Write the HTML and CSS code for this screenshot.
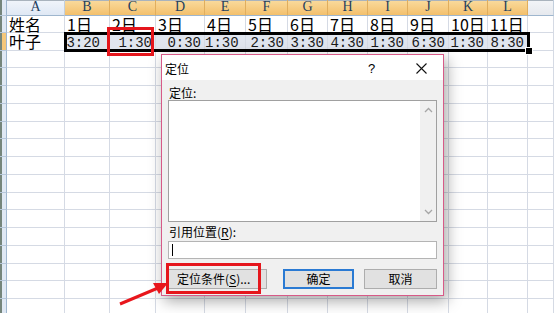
FILE: index.html
```html
<!DOCTYPE html>
<html lang="zh-CN">
<head>
  <meta charset="UTF-8" />
  <title>定位</title>
  <link rel="stylesheet" href="styles.css">
</head>
<body>
  <div class="sheet" id="sheet"></div>

  <div class="range-box"><span class="handle"></span></div>
  <div class="mark mark-cell"></div>

  <div class="dialog">
    <div class="title-bar">
      <span class="title">定位</span>
      <span class="help">?</span>
      <svg class="close" width="11" height="11" viewBox="0 0 11 11">
        <path d="M0.5 0.5 L10.5 10.5 M10.5 0.5 L0.5 10.5" stroke="#111" stroke-width="1.1" fill="none"/>
      </svg>
    </div>
    <div class="dialog-body">
      <div class="label">定位:</div>
      <div class="listbox">
        <div class="list-area"></div>
        <div class="scrollbar">
          <svg width="9" height="6" viewBox="0 0 9 6"><path d="M1 5 L4.5 1.5 L8 5" stroke="#a6a6a6" stroke-width="1.3" fill="none"/></svg>
          <svg width="9" height="6" viewBox="0 0 9 6"><path d="M1 1 L4.5 4.5 L8 1" stroke="#a6a6a6" stroke-width="1.3" fill="none"/></svg>
        </div>
      </div>
      <div class="label label-ref">引用位置(<u>R</u>):</div>
      <div class="ref-input"><span class="caret"></span></div>
      <div class="buttons">
        <div class="btn btn-special">定位条件(<u>S</u>)...</div>
        <div class="btn btn-default">确定</div>
        <div class="btn btn-cancel">取消</div>
      </div>
    </div>
  </div>

  <div class="mark mark-btn"></div>

  <svg class="arrow" width="554" height="313" viewBox="0 0 554 313">
    <line x1="120" y1="304" x2="158" y2="288" stroke="#e8161c" stroke-width="3"/>
    <polygon points="168,283 153,283 159,294" fill="#e8161c"/>
  </svg>

  <script>
    const cols = ['A', 'B', 'C', 'D', 'E', 'F', 'G', 'H', 'I', 'J', 'K', 'L'];
    const days = ['姓名', '1日', '2日', '3日', '4日', '5日', '6日', '7日', '8日', '9日', '10日', '11日'];
    const times = ['叶子', '3:20', '1:30', '0:30', '1:30', '2:30', '3:30', '4:30', '1:30', '6:30', '1:30', '8:30'];
    const sheet = document.getElementById('sheet');

    function cell(cls, text) {
      const div = document.createElement('div');
      div.className = cls;
      if (text) div.textContent = text;
      sheet.appendChild(div);
      return div;
    }

    // column header row
    cell('corner');
    cols.forEach((c, i) => cell(i === 0 ? 'col-head' : 'col-head picked', c));
    cell('col-head rest');

    // row 1
    cell('row-head');
    days.forEach(d => cell('c txt', d));
    cell('c');

    // row 2 (selected)
    cell('row-head picked');
    times.forEach((t, i) => {
      const div = cell(i === 0 ? 'c txt' : 'c sel time', t);
      if (i === 1) div.classList.add('pad-b');
      if (i === 4) div.classList.add('pad-e');
    });
    cell('c');

    // empty rows
    for (let r = 0; r < 15; r++) {
      cell('row-head');
      for (let i = 0; i <= cols.length; i++) cell('c');
    }
  </script>
</body>
</html>
```

FILE: styles.css
```css
body {
  margin: 0;
  width: 554px;
  height: 313px;
  overflow: hidden;
  background: #fff;
  position: relative;
}

.sheet {
  display: grid;
  grid-template-columns: 7px 58px 45px 46px 49px 41px 42px 40px 40px 40px 41px 39px 40px 1fr;
  grid-template-rows: 16px 17px 17.5px repeat(15, 17.75px);
}

.sheet > div {
  box-sizing: border-box;
  border-right: 1px solid #d5dae4;
  border-bottom: 1px solid #d5dae4;
  white-space: nowrap;
}

.corner,
.row-head {
  background: linear-gradient(to right, #75857b 0 2px, #dfe8f4 2px);
}

.sheet > .corner,
.sheet > .row-head {
  border-right: 1px solid #9eb6ce;
  border-bottom: 1px solid #b6c7da;
}

.sheet > .row-head.picked {
  background: linear-gradient(to right, #75857b 0 2px, #f5c77a 2px);
}

.col-head {
  background: linear-gradient(#f1f5fb, #dfe8f4);
  font-family: "Liberation Serif", serif;
  font-size: 14px;
  line-height: 14px;
  color: #24405e;
  text-align: center;
  box-shadow: inset 0 1px #a9b3bd;
}

.sheet > .col-head {
  border-right: 1px solid #c2cfdd;
  border-bottom: 1px solid #9eb6ce;
}

.col-head.picked {
  background: linear-gradient(#fadb9e, #f3c06c);
}

.sheet > .col-head.picked {
  border-right: 1px solid #e0ae5e;
}

.col-head.rest {
  background: linear-gradient(#f3f5f8, #e6e9ee);
}

.txt {
  font-family: "Noto Sans CJK SC", sans-serif;
  font-size: 16px;
  line-height: 16px;
  padding-left: 2px;
  color: #000;
}

.sel {
  background: #e0e5ee;
}

.time {
  font-family: "Liberation Mono", monospace;
  font-size: 14px;
  line-height: 14px;
  text-align: right;
  padding: 3px 3px 0 0;
  color: #1a1a1a;
}

.time.pad-b {
  padding-right: 9px;
}

.time.pad-e {
  padding-right: 12px;
}

.range-box {
  position: absolute;
  left: 64px;
  top: 32px;
  width: 466px;
  height: 20px;
  box-sizing: border-box;
  border: 3px solid #000;
}

.handle {
  position: absolute;
  right: -6px;
  bottom: -6px;
  width: 6px;
  height: 6px;
  background: #000;
  border: 1px solid #fff;
}

.mark {
  position: absolute;
  box-sizing: border-box;
  border: 3px solid #e5161c;
}

.mark-cell {
  left: 107px;
  top: 27px;
  width: 47px;
  height: 29px;
}

.mark-btn {
  left: 166px;
  top: 263px;
  width: 95px;
  height: 31px;
}

.arrow {
  position: absolute;
  left: 0;
  top: 0;
}

.dialog {
  position: absolute;
  left: 161px;
  top: 54px;
  width: 283px;
  height: 242px;
  box-sizing: border-box;
  border: 1px solid #d75a88;
  background: #f0f0f0;
  box-shadow: 3px 5px 14px rgba(0, 0, 0, 0.35);
  font-family: "Noto Sans CJK SC", sans-serif;
  font-size: 12px;
  color: #000;
  display: flex;
  flex-direction: column;
}

.title-bar {
  height: 25px;
  background: #fff;
  display: flex;
  align-items: center;
  padding-left: 3px;
}

.title {
  flex: 1;
  line-height: 14px;
  padding-top: 2px;
}

.help {
  font-family: "Liberation Sans", sans-serif;
  font-size: 13px;
  width: 12px;
  margin-right: 36px;
  padding-top: 2px;
}

.close {
  margin-right: 16px;
  margin-top: 2px;
}

.dialog-body {
  padding: 5px 6px 0 6px;
  display: flex;
  flex-direction: column;
}

.label {
  line-height: 15px;
  height: 15px;
  padding-left: 1px;
}

.listbox {
  height: 122px;
  box-sizing: border-box;
  border: 1px solid #a0a0a0;
  background: #fff;
  display: flex;
}

.list-area {
  flex: 1;
}

.scrollbar {
  width: 16px;
  background: #f0f0f0;
  display: flex;
  flex-direction: column;
  justify-content: space-between;
  align-items: center;
  padding: 6px 0;
}

.label-ref {
  margin-top: 2px;
}

.label u,
.btn u {
  text-underline-offset: 2px;
}

.ref-input {
  margin-top: 2px;
  height: 18px;
  box-sizing: border-box;
  border: 1px solid #b4b4b4;
  background: #fff;
  display: flex;
  align-items: center;
  padding-left: 3px;
}

.caret {
  width: 1px;
  height: 12px;
  background: #000;
}

.buttons {
  margin-top: 10px;
  display: flex;
}

.btn {
  height: 20px;
  box-sizing: border-box;
  border: 1px solid #adadad;
  background: #e1e1e1;
  display: flex;
  align-items: center;
  justify-content: center;
  line-height: 14px;
}

.btn-special {
  width: 99px;
  justify-content: flex-start;
  padding-left: 8px;
}

.btn-default {
  width: 71px;
  margin-left: 16px;
  border: 2px solid #2a7ad3;
}

.btn-cancel {
  width: 73px;
  margin-left: 10px;
}
```
